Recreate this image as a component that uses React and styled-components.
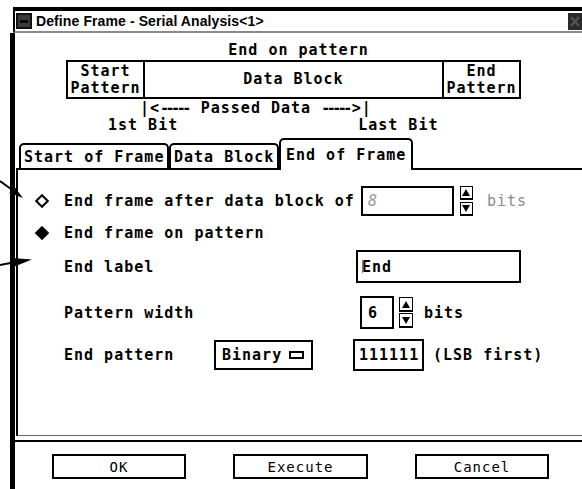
import React from "react";
import styled, { createGlobalStyle } from "styled-components";

const MONO = `"DejaVu Sans Mono", "Liberation Mono", monospace`;

const GlobalStyle = createGlobalStyle`
  html, body {
    margin: 0;
    padding: 0;
    background: #fff;
  }
  #root {
    width: 582px;
    height: 489px;
    overflow: hidden;
  }
`;

const Screen = styled.div`
  position: relative;
  width: 582px;
  height: 489px;
  overflow: hidden;
  background: #fff;
  color: #000;
  font-family: ${MONO};
  font-size: 15px;
  font-weight: bold;
  letter-spacing: 1px;
`;

const Window = styled.div`
  margin: 7px 0 0 13px;
  height: 478px;
  border-top: 4px solid #000;
  display: flex;
  flex-direction: column;
`;

const TitleBar = styled.div`
  height: 20px;
  border-left: 2px solid #000;
  border-bottom: 2px solid #8a8a8a;
  display: flex;
  align-items: center;
  padding-left: 1px;
`;

const MenuBox = styled.div`
  width: 16px;
  height: 16px;
  background: #3a3a3a;
  box-shadow: inset 0 0 0 2px #111;
  display: flex;
  align-items: center;
  justify-content: center;
  &::after {
    content: "";
    width: 8px;
    height: 3px;
    background: #0a0a0a;
  }
`;

const Title = styled.span`
  margin-left: 4px;
  font-family: "Liberation Sans", Arial, sans-serif;
  font-size: 14px;
  font-weight: bold;
  letter-spacing: 0.1px;
`;

const CloseBox = styled.div`
  margin-left: auto;
  width: 14px;
  height: 17px;
  background: #2a2a2a;
  display: flex;
  align-items: center;
  justify-content: center;
`;

const Body = styled.div`
  flex: 1;
  margin-left: -3px;
  border-left: 5px solid #000;
  display: flex;
  flex-direction: column;
`;

const Heading = styled.div`
  margin-top: 9px;
  line-height: 16px;
  text-align: center;
`;

const Diagram = styled.div`
  box-sizing: border-box;
  margin: 2px 0 0 51px;
  width: 455px;
  height: 39px;
  border: 2px solid #000;
  display: grid;
  grid-template-columns: 75px 1fr 75px;
`;

const DiagramCell = styled.div`
  display: flex;
  flex-direction: column;
  align-items: center;
  justify-content: center;
  line-height: 17px;
  border-left: ${(p) => (p.$divided ? "2px solid #000" : "none")};
  border-right: ${(p) => (p.$divided ? "2px solid #000" : "none")};
`;

const PassedRow = styled.div`
  margin-top: 1px;
  padding-left: 125px;
  line-height: 16px;
  white-space: pre;
`;

const Dashes = styled.span`
  letter-spacing: -3.5px;
  margin-right: 3px;
`;

const BitRow = styled.div`
  margin-top: 1px;
  padding-left: 93px;
  line-height: 16px;
  display: flex;
  gap: 180px;
`;

const TabBar = styled.div`
  margin-top: 5px;
  padding-left: 4px;
  display: flex;
  align-items: flex-end;
`;

const Tab = styled.div`
  box-sizing: border-box;
  position: relative;
  z-index: ${(p) => (p.$active ? 1 : 0)};
  width: ${(p) => p.$w}px;
  height: ${(p) => (p.$active ? 32 : 25)}px;
  margin-bottom: ${(p) => (p.$active ? -2 : 0)}px;
  padding: ${(p) => (p.$active ? "6px 0 0 5px" : "3px 0 0 3px")};
  border: 2px solid #000;
  border-bottom: none;
  border-radius: 5px 5px 0 0;
  background: #fff;
  line-height: 18px;
  white-space: pre;
`;

const Panel = styled.div`
  box-sizing: border-box;
  margin-left: 1px;
  height: 268px;
  padding-top: 16px;
  border-left: 2px solid #000;
  border-top: 2px solid #000;
  border-bottom: 1px solid #666;
  display: flex;
  flex-direction: column;
`;

const Row = styled.div`
  display: flex;
  align-items: center;
  height: ${(p) => p.$h}px;
  margin-top: ${(p) => p.$mt || 0}px;
  padding-left: ${(p) => p.$indent}px;
`;

const Radio = styled.svg`
  flex-shrink: 0;
  margin-right: 15px;
`;

const Label = styled.span`
  flex-shrink: 0;
  width: ${(p) => (p.$w ? `${p.$w}px` : "auto")};
  white-space: pre;
`;

const Field = styled.div`
  box-sizing: border-box;
  flex-shrink: 0;
  width: ${(p) => p.$w}px;
  height: ${(p) => p.$h}px;
  margin-left: ${(p) => p.$ml || 0}px;
  padding-left: ${(p) => p.$pl || 4}px;
  border: 2px solid #000;
  display: flex;
  align-items: center;
  color: ${(p) => (p.$disabled ? "#9a9a9a" : "#000")};
  font-weight: ${(p) => (p.$disabled ? "normal" : "bold")};
  font-style: ${(p) => (p.$disabled ? "italic" : "normal")};
  white-space: pre;
`;

const Caret = styled.span`
  display: inline-block;
  width: 1px;
  height: 13px;
  margin-right: -1px;
  background: #888;
`;

const Spinner = styled.div`
  flex-shrink: 0;
  margin-left: ${(p) => p.$ml}px;
  display: flex;
  flex-direction: column;
  gap: ${(p) => p.$gap}px;
`;

const SpinButton = styled.div`
  box-sizing: border-box;
  width: ${(p) => p.$w}px;
  height: ${(p) => p.$h}px;
  border: 1px solid #000;
  border-bottom-width: 2px;
  display: flex;
  align-items: center;
  justify-content: center;
`;

const Unit = styled.span`
  margin-left: ${(p) => p.$ml}px;
  color: ${(p) => (p.$disabled ? "#8a8a8a" : "#000")};
  font-weight: ${(p) => (p.$disabled ? "normal" : "bold")};
`;

const OptionButton = styled.div`
  box-sizing: border-box;
  flex-shrink: 0;
  width: 99px;
  height: 30px;
  padding-left: 6px;
  border: 2px solid #000;
  display: flex;
  align-items: center;
`;

const OptionMark = styled.span`
  box-sizing: border-box;
  margin-left: 7px;
  width: 15px;
  height: 8px;
  border: 2px solid #000;
`;

const Note = styled.span`
  margin-left: 9px;
  white-space: pre;
`;

const Separator = styled.div`
  margin: 4px 0 0 -1px;
  height: 2px;
  background: #000;
`;

const ButtonRow = styled.div`
  margin-top: 12px;
  padding-left: 37px;
  display: flex;
  gap: 47px;
`;

const Button = styled.div`
  box-sizing: border-box;
  width: ${(p) => p.$w}px;
  height: 25px;
  border: 2px solid #000;
  display: flex;
  align-items: center;
  justify-content: center;
  font-size: 14px;
  font-weight: normal;
`;

const Annotations = styled.svg`
  position: absolute;
  left: 0;
  top: 0;
  pointer-events: none;
`;

function Diamond({ filled }) {
  return (
    <Radio width="14" height="14" viewBox="0 0 14 14">
      <polygon
        points="7,1.2 12.8,7 7,12.8 1.2,7"
        fill={filled ? "#000" : "#fff"}
        stroke="#000"
        strokeWidth="2"
      />
    </Radio>
  );
}

function SpinArrows({ w, h, gap, ml }) {
  return (
    <Spinner $ml={ml} $gap={gap}>
      <SpinButton $w={w} $h={h}>
        <svg width="8" height="7" viewBox="0 0 8 7">
          <polygon points="4,0 8,7 0,7" fill="#000" />
        </svg>
      </SpinButton>
      <SpinButton $w={w} $h={h}>
        <svg width="8" height="7" viewBox="0 0 8 7">
          <polygon points="0,0 8,0 4,7" fill="#000" />
        </svg>
      </SpinButton>
    </Spinner>
  );
}

export default function App() {
  return (
    <>
      <GlobalStyle />
      <Screen>
        <Window>
          <TitleBar>
            <MenuBox />
            <Title>Define Frame - Serial Analysis&lt;1&gt;</Title>
            <CloseBox>
              <svg width="10" height="11" viewBox="0 0 10 11">
                <path d="M1 1 L9 10 M9 1 L1 10" stroke="#555" strokeWidth="2" />
              </svg>
            </CloseBox>
          </TitleBar>
          <Body>
            <Heading>End on pattern</Heading>
            <Diagram>
              <DiagramCell>
                <span>Start</span>
                <span>Pattern</span>
              </DiagramCell>
              <DiagramCell $divided>Data Block</DiagramCell>
              <DiagramCell>
                <span>End</span>
                <span>Pattern</span>
              </DiagramCell>
            </Diagram>
            <PassedRow>
              |&lt;<Dashes>-----</Dashes> Passed Data <Dashes>-----</Dashes>&gt;|
            </PassedRow>
            <BitRow>
              <span>1st Bit</span>
              <span>Last Bit</span>
            </BitRow>
            <TabBar>
              <Tab $w={150}>Start of Frame</Tab>
              <Tab $w={110}>Data Block</Tab>
              <Tab $w={134} $active>
                End of Frame
              </Tab>
            </TabBar>
            <Panel>
              <Row $h={30} $indent={17}>
                <Diamond />
                <Label>End frame after data block of</Label>
                <Field $w={93} $h={30} $ml={6} $pl={5} $disabled>
                  8
                </Field>
                <SpinArrows w={13} h={14} gap={2} ml={6} />
                <Unit $ml={14} $disabled>
                  bits
                </Unit>
              </Row>
              <Row $h={20} $mt={7} $indent={17}>
                <Diamond filled />
                <Label>End frame on pattern</Label>
              </Row>
              <Row $h={33} $mt={7} $indent={46}>
                <Label $w={292}>End label</Label>
                <Field $w={165} $h={33}>
                  <Caret />
                  End
                </Field>
              </Row>
              <Row $h={33} $mt={13} $indent={46}>
                <Label $w={296}>Pattern width</Label>
                <Field $w={34} $h={33} $pl={6}>
                  6
                </Field>
                <SpinArrows w={14} h={15} gap={1} ml={5} />
                <Unit $ml={11}>bits</Unit>
              </Row>
              <Row $h={32} $mt={10} $indent={46}>
                <Label $w={150}>End pattern</Label>
                <OptionButton>
                  Binary
                  <OptionMark />
                </OptionButton>
                <Field $w={71} $h={32} $ml={40}>
                  111111
                </Field>
                <Note>(LSB first)</Note>
              </Row>
            </Panel>
            <Separator />
            <ButtonRow>
              <Button $w={134}>OK</Button>
              <Button $w={135}>Execute</Button>
              <Button $w={134}>Cancel</Button>
            </ButtonRow>
          </Body>
        </Window>
        <Annotations width="40" height="489" viewBox="0 0 40 489">
          <line x1="0" y1="181" x2="13" y2="190.5" stroke="#000" strokeWidth="2" />
          <polygon points="23,198 9.4,192.8 14.2,186.4" fill="#000" />
          <line x1="0" y1="265" x2="13" y2="262.6" stroke="#000" strokeWidth="2" />
          <polygon points="32,259.5 12.6,267.3 11.4,257.9" fill="#000" />
        </Annotations>
      </Screen>
    </>
  );
}
